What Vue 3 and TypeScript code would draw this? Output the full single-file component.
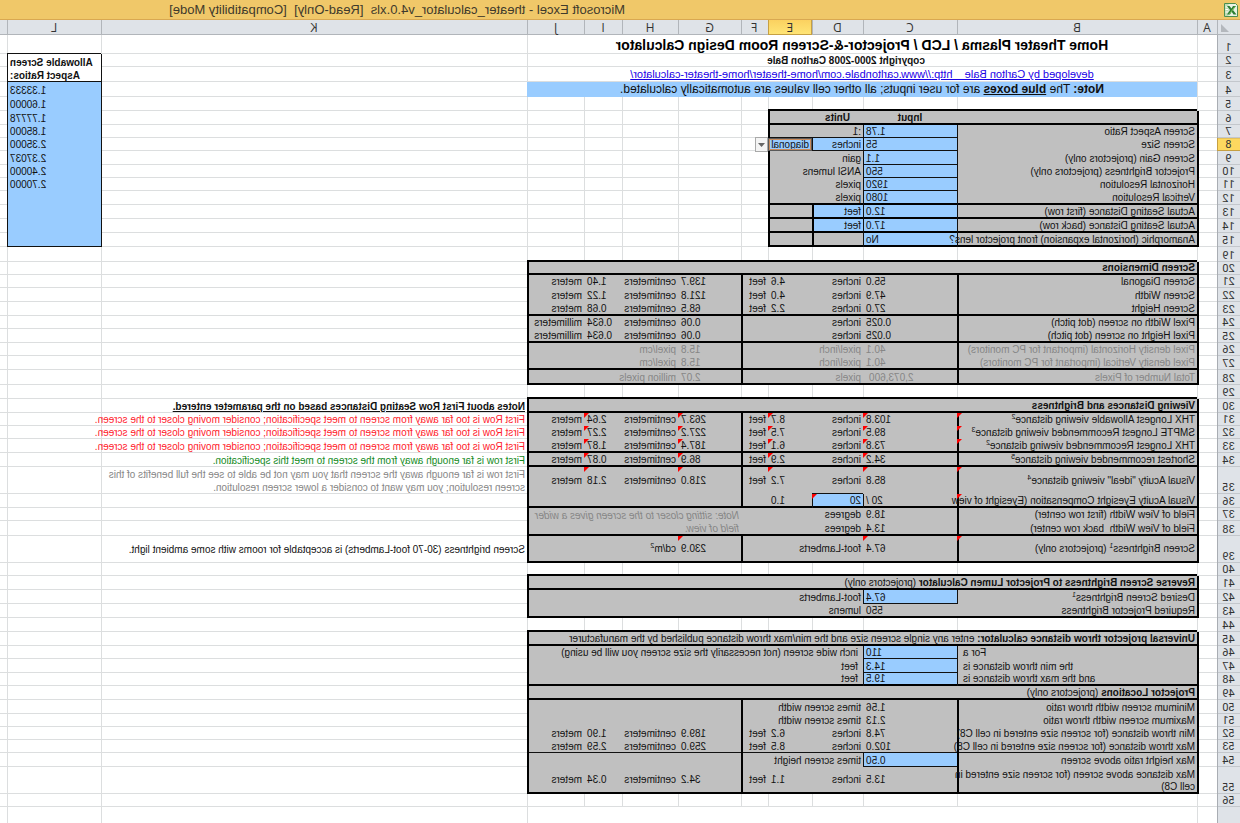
<script setup lang="ts">
import { ref } from 'vue'

interface Seg { t: string; k?: string }
interface Content { segs: Seg[]; cls: string; span: number; rows: number }
interface Cell extends Content { key: string; control: boolean; mark: boolean }
interface Row { label: string; height: number; cells: Cell[] }

const COLS = ['A', 'B', 'C', 'D', 'E', 'F', 'G', 'H', 'I', 'J', 'K', 'L', 'M']
const heights: [number, number][] = [
  [1, 19], [2, 13], [3, 15], [4, 15], [5, 14], [6, 14], [7, 13], [8, 13], [9, 14], [10, 13],
  [11, 13], [12, 14], [13, 14], [14, 14], [15, 14], [19, 15], [20, 13], [21, 13], [22, 14],
  [23, 14], [24, 13], [25, 14], [26, 13], [27, 14], [28, 15], [29, 14], [30, 14], [31, 13],
  [32, 13], [33, 14], [34, 14], [35, 27], [36, 14], [37, 13], [38, 15], [39, 27], [40, 13],
  [41, 14], [42, 14], [43, 14], [44, 14], [45, 14], [46, 13], [47, 14], [48, 13], [49, 14],
  [50, 14], [51, 13], [52, 13], [53, 13], [54, 14], [55, 27], [56, 13], [57, 16],
]
const rowIds = heights.map((h) => h[0])

const content = new Map<string, Content>()
const fill = new Map<string, string>()
const right = new Map<string, number>()
const bottom = new Map<string, number>()
const marks = new Set<string>()

const key = (c: number, r: number) => COLS[c] + rowIds[r]

function parse(range: string): [number, number, number, number] {
  const m = /^([A-M])(\d+)(?::([A-M])(\d+))?$/.exec(range)
  if (!m) throw new Error(range)
  const c1 = COLS.indexOf(m[1])
  const r1 = rowIds.indexOf(Number(m[2]))
  return [c1, r1, m[3] ? COLS.indexOf(m[3]) : c1, m[4] ? rowIds.indexOf(Number(m[4])) : r1]
}

function each(range: string, fn: (c: number, r: number) => void) {
  const [c1, r1, c2, r2] = parse(range)
  for (let r = r1; r <= r2; r++) for (let c = c1; c <= c2; c++) fn(c, r)
}

const paint = (range: string, colour: string) => each(range, (c, r) => fill.set(key(c, r), colour))
const under = (range: string, w: number) => each(range, (c, r) => bottom.set(key(c, r), w))
const side = (range: string, w: number) => each(range, (c, r) => right.set(key(c, r), w))
function box(range: string, w: number) {
  const [c1, r1, c2, r2] = parse(range)
  each(range, (c, r) => {
    if (c === c1) right.set(key(c - 1, r), w)
    if (c === c2) right.set(key(c, r), w)
    if (r === r1) bottom.set(key(c, r - 1), w)
    if (r === r2) bottom.set(key(c, r), w)
  })
}

function put(range: string, text: string | Seg[], cls = '') {
  const [c1, r1, c2, r2] = parse(range)
  content.set(key(c1, r1), {
    segs: typeof text === 'string' ? [{ t: text }] : text,
    cls, span: c2 - c1 + 1, rows: r2 - r1 + 1,
  })
}

/* Fills */
paint('B4:J4', 'blue')
paint('B6:E15', 'gray')
paint('C7:C15', 'blue')
paint('D8:E8', 'blue')
paint('D13:D14', 'blue')
paint('L4:L15', 'blue')
for (const r of ['B20:J28', 'B30:J39', 'B41:J43', 'B45:J55']) paint(r, 'gray')
for (const r of ['D36', 'C42', 'C46:C48', 'C54']) paint(r, 'blue')

/* Rules */
side('B7:B15', 1)
for (const r of [7, 8, 9, 10, 11, 12]) box(`C${r}`, 1)
under('C7:E8', 1)
side('D8', 1)
for (const r of ['B6:E6', 'B12:E12', 'B13:E13', 'B14:E14']) under(r, 2)
side('C7:C15', 1)
side('D13:D15', 2)
box('B6:E15', 2)
box('L2:L3', 1)
box('L4:L15', 1)
for (const r of ['B20:J20', 'B23:J23', 'B25:J25', 'B27:J27']) under(r, 2)
side('B21:B28', 2)
side('F21:F28', 2)
box('B20:J28', 2)
for (const r of ['B30:J30', 'B33:J33', 'B34:J34', 'B36:J36', 'B38:J38']) under(r, 2)
side('B31:B39', 2)
side('F31:F36', 2)
side('F39', 2)
box('D36', 1)
under('D36', 2)
box('B30:J39', 2)
box('C42', 1)
under('B41:J41', 2)
box('B41:J43', 2)
for (const r of [46, 47, 48]) box(`C${r}`, 1)
under('B53:J53', 1)
box('C54', 1)
for (const r of ['B45:J45', 'B48:J48', 'B49:J49']) under(r, 2)
side('B50:B55', 2)
side('F50:F55', 2)
box('B45:J55', 2)

/* Heading */
put('B1:J1', 'Home Theater Plasma / LCD / Projector-&-Screen Room Design Calculator', 'title')
put('B2:J2', 'copyright 2000-2008 Carlton Bale', 'bold center shifted')
put('B3:J3', [{ t: 'developed by Carlton Bale    http://www.carltonbale.com/home-theater/home-theater-calculator/', k: 'link' }], 'center weblink')
put('B4:J4', [
  { t: 'Note:', k: 'b' }, { t: ' The ' }, { t: 'blue boxes', k: 'b u' },
  { t: ' are for user inputs; all other cell values are automatically calculated.' },
], 'center notice')

/* Inputs */
put('C6', 'Input', 'bold center')
put('D6', 'Units', 'bold center')
const inputs: [number, string, string, string][] = [
  [7, 'Screen Aspect Ratio', '1.78', ':1'],
  [8, 'Screen Size', '55', 'inches'],
  [9, 'Screen Gain (projectors only)', '1.1', 'gain'],
  [10, 'Projector Brightness (projectors only)', '550', 'ANSI lumens'],
  [11, 'Horizontal Resolution', '1920', 'pixels'],
  [12, 'Vertical Resolution', '1080', 'pixels'],
  [13, 'Actual Seating Distance (first row)', '12.0', 'feet'],
  [14, 'Actual Seating Distance (back row)', '17.0', 'feet'],
  [15, 'Anamorphic (horizontal expansion) front projector lens?', 'No', ''],
]
for (const [r, name, value, unit] of inputs) {
  put(`B${r}`, name, r === 15 ? 'spill' : '')
  put(`C${r}`, value, 'num')
  put(r === 10 ? 'D10:E10' : `D${r}`, unit)
}
put('E8', '')

/* Allowable ratios */
put('L2:L3', 'Allowable Screen\nAspect Ratios:', 'bold num')
;['1.33333', '1.60000', '1.77778', '1.85000', '2.35000', '2.37037', '2.40000', '2.70000']
  .forEach((v, i) => put(`L${4 + i}`, v, 'num'))

/* Rows of converted lengths: inches, feet, centimeters, meters */
function lengths(r: number, name: Seg[] | string, v: string[], cls = '', metre = 'meters') {
  put(`B${r}`, name, `${cls} spill`)
  put(`C${r}`, v[0], `num ${cls}`)
  put(`D${r}`, 'inches', cls)
  if (v[1]) {
    put(`E${r}`, v[1], `num ${cls}`)
    put(`F${r}`, 'feet', cls)
  }
  put(`G${r}`, v[2], `num ${cls}`)
  put(`H${r}`, 'centimeters', cls)
  put(`I${r}`, v[3], `num ${cls}`)
  put(`J${r}`, metre, cls)
}

put('B20:J20', 'Screen Dimensions', 'bold')
lengths(21, 'Screen Diagonal', ['55.0', '4.6', '139.7', '1.40'])
lengths(22, 'Screen Width', ['47.9', '4.0', '121.8', '1.22'])
lengths(23, 'Screen Height', ['27.0', '2.2', '68.5', '0.68'])
lengths(24, 'Pixel Width on screen (dot pitch)', ['0.025', '', '0.06', '0.634'], '', 'millimeters')
lengths(25, 'Pixel Height on screen (dot pitch)', ['0.025', '', '0.06', '0.634'], '', 'millimeters')
for (const [r, way] of [[26, 'Horizontal'], [27, 'Vertical']]) {
  put(`B${r}`, `Pixel density ${way} (important for PC monitors)`, 'dim')
  put(`C${r}`, '40.1', 'num dim')
  put(`D${r}`, 'pixel/inch', 'dim')
  put(`G${r}`, '15.8', 'num dim')
  put(`H${r}`, 'pixel/cm', 'dim')
}
put('B28', 'Total Number of Pixels', 'dim')
put('C28', '2,073,600', 'num dim indent')
put('D28', 'pixels', 'dim')
put('G28', '2.07', 'num dim')
put('H28:I28', 'million pixels', 'dim')

const sup = (t: string, n: string, rest = ''): Seg[] => [{ t }, { t: n, k: 'sup' }, { t: rest }]
put('B30:J30', 'Viewing Distances and Brightness', 'bold')
lengths(31, sup('THX Longest Allowable viewing distance', '2'), ['103.8', '8.7', '263.7', '2.64'])
lengths(32, sup('SMPTE Longest Recommended viewing distance', '3'), ['89.5', '7.5', '227.2', '2.27'])
lengths(33, sup('THX Longest Recommended viewing distance', '2'), ['73.8', '6.1', '187.4', '1.87'])
lengths(34, sup('Shortest recommended viewing distance', '5'), ['34.2', '2.9', '86.9', '0.87'])
lengths(35, sup('Visual Acuity "ideal" viewing distance', '4'), ['85.8', '7.2', '218.0', '2.18'], 'vmid')
put('B36', 'Visual Acuity Eyesight Compensation (Eyesight of view', 'spill')
put('C36', '20 /', 'num')
put('D36', '20')
put('E36', '1.0', 'num')
put('B37', 'Field of View Width (first row center)')
put('C37', '18.9', 'num')
put('D37:E37', 'degrees')
put('B38', 'Field of View Width  back row center)')
put('C38', '13.4', 'num')
put('D38:E38', 'degrees')
put('G37:J38', 'Note: sitting closer to the screen gives a wider field of view.', 'dim ital wrap')
put('B39', sup('Screen Brightness', '1', ' (projectors only)'), 'vmid')
put('C39', '67.4', 'num vmid')
put('D39:E39', 'foot-Lamberts', 'vmid')
put('G39', '230.9', 'num vmid')
put('H39', sup('cd/m', '2'), 'vmid')
for (const r of ['B31:B33', 'B35:B36', 'B39', 'C31:C35', 'C39', 'D36', 'E31:E35', 'G31:G35', 'G39', 'I31:I35'])
  each(r, (c, i) => marks.add(key(c, i)))

put('K30', [{ t: 'Notes about First Row Seating Distances based on the parameter entered.', k: 'b u' }])
for (const r of [31, 32, 33])
  put(`K${r}`, 'First Row is too far away from screen to meet specification; consider moving closer to the screen.', 'red spill')
put('K34', 'First row is far enough away from the screen to meet this specification.', 'green')
put('K35', 'First row is far enough away the screen that you may not be able to see the full benefits of this\nscreen resolution; you may want to consider a lower screen resolution.', 'dim')
put('K39', 'Screen brightness (30-70 foot-Lamberts) is acceptable for rooms with some ambient light.', 'vmid')

put('B41:J41', [{ t: 'Reverse Screen Brightness to Projector Lumen Calculator', k: 'b' }, { t: ' (projectors only)' }])
put('B42', sup('Desired Screen Brightness', '1'))
put('C42', '67.4', 'num')
put('D42:E42', 'foot-Lamberts')
put('B43', 'Required Projector Brightness')
put('C43', '550', 'num')
put('D43:E43', 'lumens')

put('B45:J45', [
  { t: 'Universal projector throw distance calculator:', k: 'b' },
  { t: ' enter any single screen size and the min/max throw distance published by the manufacturer' },
])
put('B46', 'For a', 'num inset')
put('B47', 'the min throw distance is', 'num inset')
put('B48', 'and the max throw distance is', 'num inset')
put('C46', '110', 'num')
put('C47', '14.3', 'num')
put('C48', '19.5', 'num')
put('D46:J46', 'inch wide screen (not necessarily the size screen you will be using)', 'inset')
put('D47', 'feet', 'inset')
put('D48', 'feet', 'inset')
put('B49:J49', [{ t: 'Projector Locations', k: 'b' }, { t: ' (projectors only)' }])
put('B50', 'Minimum screen width throw ratio')
put('C50', '1.56', 'num')
put('D50:F50', 'times screen width')
put('B51', 'Maximum screen width throw ratio')
put('C51', '2.13', 'num')
put('D51:F51', 'times screen width')
lengths(52, 'Min throw distance (for screen size entered in cell C8)', ['74.8', '6.2', '189.9', '1.90'])
lengths(53, 'Max throw distance (for screen size entered in cell C8)', ['102.0', '8.5', '259.0', '2.59'])
put('B54', 'Max height ratio above screen')
put('C54', '0.50', 'num')
put('D54:F54', 'times screen height')
lengths(55, '', ['13.5', '1.1', '34.2', '0.34'], 'vmid')
put('B55', 'Max distance above screen (for screen size entered in\ncell C8)', 'spill')

const taken = new Set<string>()
const rows: Row[] = heights.map(([id, height], r) => {
  const cells: Cell[] = []
  for (let c = 0; c < COLS.length; c++) {
    const k = key(c, r)
    if (taken.has(k)) continue
    const it = content.get(k) ?? { segs: [], cls: '', span: 1, rows: 1 }
    for (let y = r; y < r + it.rows; y++) for (let x = c; x < c + it.span; x++) taken.add(key(x, y))
    const f = fill.get(k) ?? (id === 57 ? 'tail' : 'white')
    const rb = right.get(key(c + it.span - 1, r)) ?? 0
    const bb = bottom.get(key(c, r + it.rows - 1)) ?? 0
    cells.push({
      ...it, key: k, control: k === 'E8', mark: marks.has(k),
      cls: [it.cls, f, rb ? `r${rb}` : '', bb ? `b${bb}` : '', k === 'E8' ? 'picked' : '', c === 12 ? 'last' : ''].join(' '),
    })
  }
  return { label: id === 57 ? '' : String(id), height, cells }
})

const measure = ref('diagonal')
</script>

<template>
  <div class="window">
    <header class="titlebar">
      <svg class="logo" viewBox="0 0 14 14" role="img" aria-label="Excel">
        <path d="M2.500.5H13.500V13.500H.5V2.500Z" fill="#e9f3e4" stroke="#4c8f4f" />
        <path d="M9.500 1H13V13H9.500Z" fill="#bfdcb5" />
        <path d="M10 4H12.500M10 6.500H12.500M10 9H12.500" stroke="#fff" />
        <path d="M2 3H5L6.500 5.500 8.500 3H11L8 7 11 11.500H8L6.300 8.800 4.500 11.500H1.500L5 7Z" fill="#2c7d34" />
        <path d="M3 3.500L8.500 11" stroke="#7cc25a" />
      </svg>
      <h1>Microsoft Excel - theater_calculator_v4.0.xls&nbsp; [Read-Only]&nbsp; [Compatibility Mode]</h1>
    </header>
    <table class="sheet">
      <colgroup>
        <col class="w-head"><col class="w-a"><col class="w-b"><col class="w-c"><col class="w-d">
        <col class="w-e"><col class="w-f"><col class="w-g"><col class="w-h"><col class="w-i">
        <col class="w-j"><col class="w-k"><col class="w-l"><col class="w-m">
      </colgroup>
      <thead>
        <tr>
          <th class="corner">
            <svg viewBox="0 0 8 8"><path d="M8 0V8H0Z" fill="#b4b8bd" /></svg>
          </th>
          <th
            v-for="c in COLS" :key="c" scope="col"
            :class="{ active: c === 'E', last: c === 'M' }"
          >{{ c === 'M' ? '' : c }}</th>
        </tr>
      </thead>
      <tbody>
        <tr v-for="row in rows" :key="row.label" :style="{ height: row.height + 'px' }">
          <th scope="row" :class="{ active: row.label === '8', end: !row.label }">{{ row.label }}</th>
          <td
            v-for="cell in row.cells" :key="cell.key" :class="cell.cls"
            :colspan="cell.span" :rowspan="cell.rows"
          >
            <template v-if="cell.control">
              <select v-model="measure" aria-label="Screen size measure">
                <option>diagonal</option>
                <option>width</option>
                <option>height</option>
              </select>
              <button type="button" class="drop" aria-label="Show choices">
                <svg viewBox="0 0 7 4"><path d="M0 0H7L3.500 4Z" fill="#666" /></svg>
              </button>
            </template>
            <template v-for="(s, i) in cell.segs" v-else :key="i">
              <a v-if="s.k === 'link'" href="#">{{ s.t }}</a>
              <span v-else :class="s.k">{{ s.t }}</span>
            </template>
            <i v-if="cell.mark" class="mark"></i>
          </td>
        </tr>
      </tbody>
    </table>
  </div>
</template>

<style>
body { margin: 0; background: #fff; overflow: hidden; }
</style>

<style scoped>
.window {
  min-height: 100vh;
  transform: scaleX(-1);
  background: #fff;
  color: #111;
  font: 10px/13px "Liberation Sans", Arial, sans-serif;
}
.titlebar {
  display: grid;
  grid-template-columns: 613px 1fr;
  align-items: center;
  height: 20px;
  box-sizing: border-box;
  padding-left: 2px;
  border-bottom: 1px solid #d9a851;
  background: #f0c869;
}
.logo { width: 14px; height: 14px; display: block; }
h1 {
  margin: 0;
  font-weight: normal;
  font-size: 13px;
  line-height: 18px;
  color: #3f3a2c;
  white-space: nowrap;
}
.sheet {
  width: 100%;
  table-layout: fixed;
  border-collapse: separate;
  border-spacing: 0;
}
.w-head { width: 23px; }
.w-a { width: 20px; }
.w-b { width: 240px; }
.w-c { width: 94px; }
.w-d { width: 51px; }
.w-e { width: 44px; }
.w-f { width: 27px; }
.w-g { width: 63px; }
.w-h { width: 56px; }
.w-i { width: 38px; }
.w-j { width: 57px; }
.w-l { width: 94px; }
.w-m { width: 7px; }

th {
  padding: 0;
  background: #dfe3e8;
  box-shadow: inset -1px -1px #b1b5ba;
  color: #333;
  font-weight: normal;
  text-align: center;
}
thead th {
  height: 15px;
  font: 12px/14px "Open Sans", sans-serif;
  vertical-align: middle;
}
thead th.last { box-shadow: inset 0 -1px #b1b5ba; }
tbody th {
  box-shadow: inset -1px 0 #a9adb3, inset 0 -1px #c3c7cc;
  font-family: Roboto, sans-serif;
  font-size: 11px;
  vertical-align: bottom;
}
tbody th.end { box-shadow: inset -1px 0 #a9adb3; }
th.active { background: linear-gradient(#fbd160, #ffe677); box-shadow: inset -1px -1px #c6a043, inset 1px 0 #c6a043; }
tbody th.active { background: #fdd85f; box-shadow: inset 0 -1px #c6a043, inset -1px 0 #c6a043, inset 0 1px #e6c25a; }
.corner svg { display: block; width: 8px; height: 8px; margin-left: 11px; }

td {
  --rw: 0px;
  --bw: 0px;
  --rc: #111;
  --bc: #111;
  position: relative;
  padding: 0 2px;
  overflow: hidden;
  white-space: pre;
  vertical-align: bottom;
  text-align: left;
  box-shadow: inset calc(-1 * var(--rw)) 0 var(--rc), inset 0 calc(-1 * var(--bw)) var(--bc);
}
.white { --rw: 1px; --bw: 1px; --rc: #dcdedf; --bc: #dcdedf; }
.tail:nth-child(2), .tail:nth-child(11), .tail:nth-child(12), .tail:nth-child(13) { --rw: 1px; --rc: #dcdedf; }
.last { --rw: 0px; }
.gray { background: #c0c0c0; }
.blue { background: #99ccff; }
.r1 { --rw: 1px; --rc: #111; }
.r2 { --rw: 2px; --rc: #000; }
.b1 { --bw: 1px; --bc: #111; }
.b2 { --bw: 2px; --bc: #000; padding-bottom: 1px; line-height: 12px; }
.white.b1:not(.r1, .r2), .white.b2:not(.r1, .r2) {
  box-shadow: inset 0 calc(-1 * var(--bw)) var(--bc), inset calc(-1 * var(--rw)) 0 var(--rc);
}

.spill { overflow: visible; z-index: 1; }
.num { text-align: right; padding-right: 3px; }
.center { text-align: center; }
.bold, .b { font-weight: bold; }
.u { text-decoration: underline; }
.title {
  font-size: 14px;
  line-height: 17px;
  font-weight: bold;
  text-align: center;
  color: #000;
}
.shifted { padding-left: 34px; }
.weblink { font-size: 11px; line-height: 15px; }
.weblink a { color: #1a00e6; }
.notice { font-size: 12px; line-height: 15px; }
.wrap { white-space: normal; line-height: 13px; }
.ital { font-style: italic; }
.dim { color: #868686; }
.red { color: #ff1a2b; }
.green { color: #128a1c; }
.vmid { vertical-align: middle; }
.indent { padding-right: 6px; }
.inset { padding-left: 5px; padding-right: 6px; }
.sup { font-size: 7px; line-height: 0; vertical-align: 4px; }
.mark {
  position: absolute;
  top: 0;
  right: 0;
  width: 5px;
  height: 5px;
  background: #f00;
  clip-path: polygon(0 0, 100% 0, 100% 100%);
}

.picked { overflow: visible; padding: 0; }
.picked::after {
  content: "";
  position: absolute;
  inset: 0;
  border: 1px solid #5a5a5a;
  box-shadow: inset 0 0 0 1px #c98b5c;
  pointer-events: none;
}
select {
  appearance: none;
  display: block;
  width: 100%;
  height: 13px;
  margin: 0;
  padding: 0 3px;
  border: 0;
  background: transparent;
  color: inherit;
  font: inherit;
}
.drop {
  position: absolute;
  left: 100%;
  top: -1px;
  z-index: 1;
  width: 13px;
  height: 15px;
  padding: 0;
  border: 1px solid #a9a9a9;
  background: #f4f4f4;
}
.drop svg { display: block; width: 7px; height: 4px; margin: 0 auto; }
</style>
